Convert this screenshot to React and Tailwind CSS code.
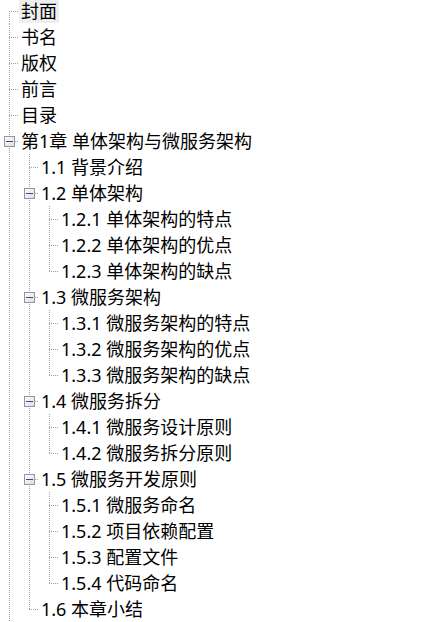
import React from "react";

// table of contents, as a Windows-style tree view
const tree = [
  { label: "封面", selected: true },
  { label: "书名" },
  { label: "版权" },
  { label: "前言" },
  { label: "目录" },
  {
    label: "第1章 单体架构与微服务架构",
    more: true, // more chapters below, scrolled off
    children: [
      { label: "1.1 背景介绍" },
      {
        label: "1.2 单体架构",
        children: [
          { label: "1.2.1 单体架构的特点" },
          { label: "1.2.2 单体架构的优点" },
          { label: "1.2.3 单体架构的缺点" },
        ],
      },
      {
        label: "1.3 微服务架构",
        children: [
          { label: "1.3.1 微服务架构的特点" },
          { label: "1.3.2 微服务架构的优点" },
          { label: "1.3.3 微服务架构的缺点" },
        ],
      },
      {
        label: "1.4 微服务拆分",
        children: [
          { label: "1.4.1 微服务设计原则" },
          { label: "1.4.2 微服务拆分原则" },
        ],
      },
      {
        label: "1.5 微服务开发原则",
        children: [
          { label: "1.5.1 微服务命名" },
          { label: "1.5.2 项目依赖配置" },
          { label: "1.5.3 配置文件" },
          { label: "1.5.4 代码命名" },
        ],
      },
      { label: "1.6 本章小结" },
    ],
  },
];

function flatten(nodes, level = 0, trail = [], out = []) {
  nodes.forEach((node, i) => {
    const isLast = i === nodes.length - 1 && !node.more;
    out.push({
      ...node,
      level,
      trail,
      isLast,
      isFirst: level === 0 && i === 0,
    });
    if (node.children) {
      flatten(node.children, level + 1, [...trail, !isLast], out);
    }
  });
  return out;
}

const LINE = "#a0a0a0";

function Connectors({ row }) {
  const { level, trail, isLast, isFirst, children } = row;
  const width = 19 + level * 20;
  const lx = 9 + level * 20;
  return (
    <svg width={width} height="26" className="shrink-0" shapeRendering="crispEdges">
      {trail.map((cont, i) =>
        cont ? (
          <line
            key={i}
            x1={9 + i * 20 + 0.5}
            x2={9 + i * 20 + 0.5}
            y1="0"
            y2="26"
            stroke={LINE}
            strokeDasharray="1 1"
          />
        ) : null
      )}
      <line
        x1={lx + 0.5}
        x2={lx + 0.5}
        y1={isFirst ? 13 : 0}
        y2={isLast ? 14 : 26}
        stroke={LINE}
        strokeDasharray="1 1"
      />
      <line
        x1={lx}
        x2={width}
        y1="13.5"
        y2="13.5"
        stroke={LINE}
        strokeDasharray="1 1"
      />
      {children && (
        <g>
          <defs>
            <linearGradient id="box" x1="0" y1="0" x2="1" y2="1">
              <stop offset="0" stopColor="#ffffff" />
              <stop offset="1" stopColor="#dcdcdc" />
            </linearGradient>
          </defs>
          <rect
            x={lx - 5 + 0.5}
            y="8.5"
            width="10"
            height="10"
            fill="url(#box)"
            stroke="#969696"
          />
          <line x1={lx - 3} x2={lx + 4} y1="13.5" y2="13.5" stroke="#2c4f8d" />
        </g>
      )}
    </svg>
  );
}

function App() {
  const rows = flatten(tree);

  return (
    <div
      className="h-[622px] w-[443px] overflow-hidden bg-white text-[18px] text-black"
      style={{ fontFamily: '"Noto Sans", "Noto Sans CJK SC", sans-serif' }}
    >
      <div className="mt-[-2px]">
        {rows.map((row, i) => (
          <div key={i} className="flex h-[26px] items-center whitespace-nowrap">
            <Connectors row={row} />
            <span
              className={
                "inline-block h-[23px] px-[2px] leading-[23px] " +
                (row.selected ? "bg-[#efefef]" : "")
              }
            >
              {row.label}
            </span>
          </div>
        ))}
      </div>
    </div>
  );
}

export default App;
